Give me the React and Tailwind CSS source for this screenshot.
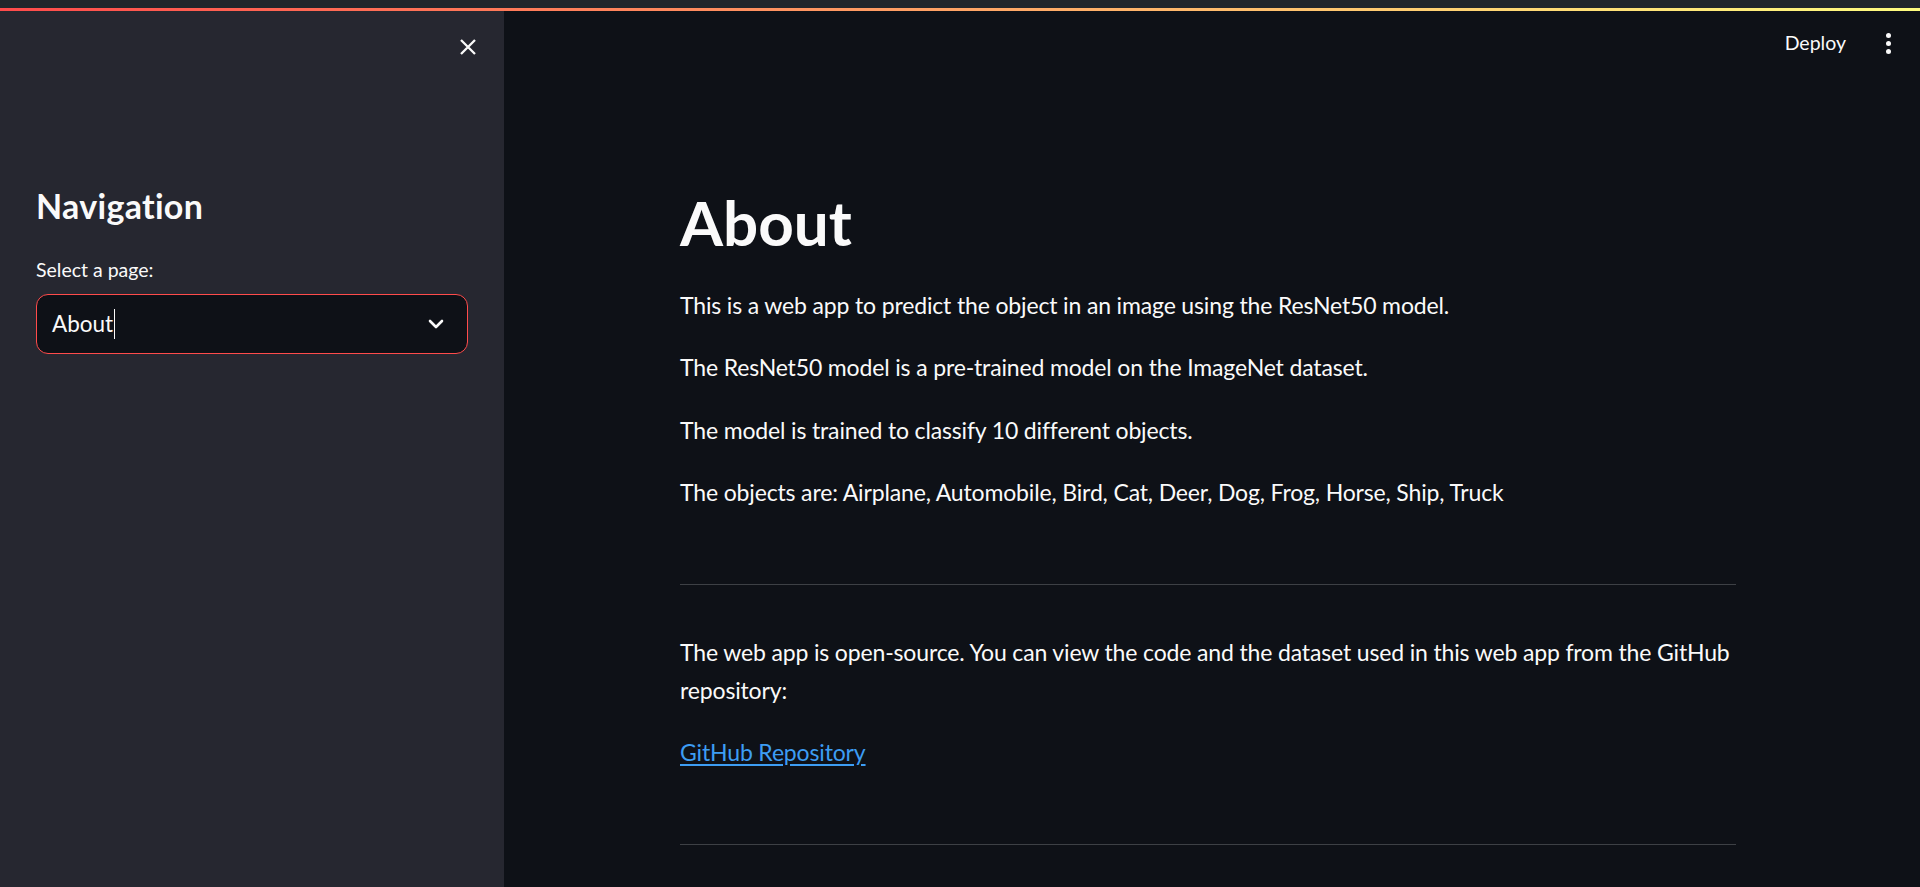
import React from 'react';
import { ChevronDown } from 'lucide-react';

const font = "font-['Lato','Liberation_Sans',sans-serif]";

const CloseIcon = () => (
    <svg width="18" height="18" viewBox="0 0 18 18" fill="none" stroke="#fafafa" strokeWidth="2.3">
        <path d="M2 2 L16 16 M16 2 L2 16" />
    </svg>
);

const Sidebar = () => (
    <aside className="w-[504px] shrink-0 bg-[#262730] px-9">
        <div className="h-[72px] flex items-center justify-end -mr-[15px]">
            <button className="w-[30px] h-[30px] flex items-center justify-center">
                <CloseIcon />
            </button>
        </div>

        <h2 className="mt-[106px] text-[34px] leading-none font-bold text-[#fafafa] tracking-[0.3px]">Navigation</h2>

        <label className="block mt-[37px] text-[19.5px] leading-none text-[#fafafa]">Select a page:</label>

        {/* selectbox, focused */}
        <div className="mt-[14px] h-[60px] rounded-[12px] border border-[#ff4b4b] bg-[#0e1117] flex items-center pl-[15px] pr-[19px]">
            <span className="text-[22.5px] text-[#fafafa]">About</span>
            <span className="ml-[1px] w-px h-[30px] bg-[#fafafa]" />
            <div className="flex-1" />
            <ChevronDown size={24} strokeWidth={2.6} color="#fafafa" />
        </div>
    </aside>
);

const paragraphs = [
    'This is a web app to predict the object in an image using the ResNet50 model.',
    'The ResNet50 model is a pre-trained model on the ImageNet dataset.',
    'The model is trained to classify 10 different objects.',
    'The objects are: Airplane, Automobile, Bird, Cat, Deer, Dog, Frog, Horse, Ship, Truck',
];

const MainArea = () => (
    <main className="flex-1 min-w-0">
        <div className="h-[64px] flex items-center justify-end pr-[29px] gap-[40px]">
            <span className="text-[19.5px] text-[#fafafa]">Deploy</span>
            <div className="flex flex-col gap-[3px]">
                <span className="w-[5px] h-[5px] rounded-full bg-[#fafafa]" />
                <span className="w-[5px] h-[5px] rounded-full bg-[#fafafa]" />
                <span className="w-[5px] h-[5px] rounded-full bg-[#fafafa]" />
            </div>
        </div>

        <div className="w-[1056px] ml-[176px] mt-[116px] text-[#fafafa]">
            <h1 className="text-[62px] leading-none font-bold">About</h1>

            <div className="mt-[33px] text-[23px] leading-[38.4px] tracking-[-0.15px]">
                {paragraphs.map((p) => (
                    <p key={p} className="mb-6">{p}</p>
                ))}
            </div>

            <hr className="mt-[72px] mb-12 border-0 h-px bg-[#3d4045]" />

            <div className="text-[23px] leading-[38.4px] tracking-[-0.15px]">
                <p className="mb-6">
                    The web app is open-source. You can view the code and the dataset used in this web app from the GitHub repository:
                </p>
                <p className="mb-6">
                    <a href="#" className="text-[#3d9df3] underline underline-offset-[3px]">GitHub Repository</a>
                </p>
            </div>

            <hr className="mt-[72px] border-0 h-px bg-[#3d4045]" />
        </div>
    </main>
);

export default function App() {
    return (
        <div className={`h-[887px] w-full flex flex-col overflow-hidden bg-[#0e1117] ${font}`}>
            <div className="h-2 shrink-0 bg-[#22262b]" />
            <div className="h-[3px] shrink-0 bg-[linear-gradient(90deg,#ff4b4b,#fffd80)]" />
            <div className="flex flex-1 min-h-0">
                <Sidebar />
                <MainArea />
            </div>
        </div>
    );
}
